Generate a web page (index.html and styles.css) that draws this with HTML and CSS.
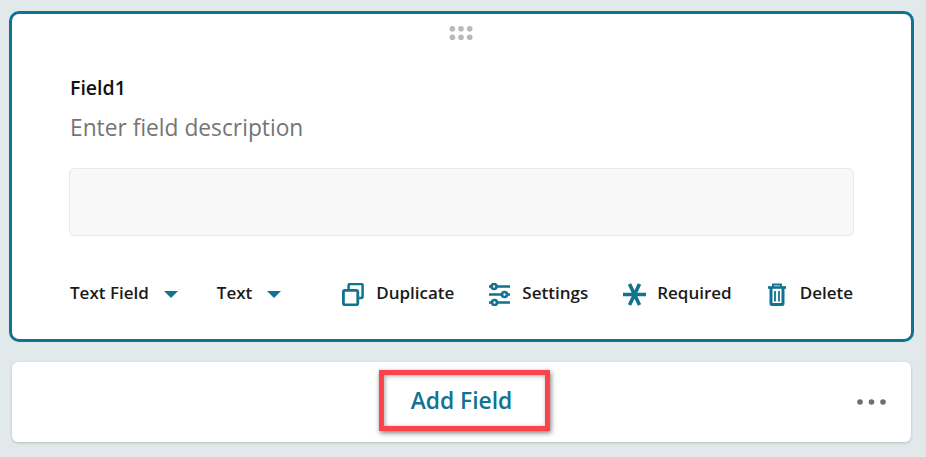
FILE: index.html
```html
<!DOCTYPE html>
<html lang="en">
<head>
    <meta charset="UTF-8">
    <meta name="viewport" content="width=device-width, initial-scale=1.0">
    <title>Form Builder</title>
    <link rel="stylesheet" href="styles.css">
</head>
<body>
<div class="page">
    <section class="field-card">
        <div class="drag-handle">
            <svg width="24" height="16" viewBox="0 0 24 16" fill="#b9b9b9">
                <circle cx="3.4" cy="3.8" r="2.8"/><circle cx="12" cy="3.8" r="2.8"/><circle cx="20.7" cy="3.8" r="2.8"/>
                <circle cx="3.4" cy="12.2" r="2.8"/><circle cx="12" cy="12.2" r="2.8"/><circle cx="20.7" cy="12.2" r="2.8"/>
            </svg>
        </div>
        <div class="field-name">Field1</div>
        <div class="field-desc">Enter field description</div>
        <div class="field-input"></div>
        <div class="toolbar">
            <div class="dropdown dropdown-type">Text Field <span class="caret"></span></div>
            <div class="dropdown">Text <span class="caret"></span></div>
            <div class="actions">
                <div class="action action-duplicate">
                    <svg width="22" height="23" viewBox="0 0 22 23" fill="none" stroke="#0f7391" stroke-width="2.5">
                        <path d="M6.6 6V2.5a1.5 1.5 0 0 1 1.5-1.5h11a1.5 1.5 0 0 1 1.5 1.5v11a1.5 1.5 0 0 1-1.5 1.5h-2"/>
                        <rect x="1.4" y="7.4" width="14.4" height="14.4" rx="1.5" stroke-width="2.8"/>
                    </svg>
                    Duplicate
                </div>
                <div class="action">
                    <svg width="21" height="23" viewBox="0 0 21 23" fill="#fff" stroke="#0f7391" stroke-width="2.6">
                        <path d="M0 3.5h21M0 11.5h21M0 19.5h21"/>
                        <circle cx="5" cy="3.5" r="2.5"/><circle cx="15.5" cy="11.5" r="2.5"/><circle cx="5.5" cy="19.5" r="2.5"/>
                    </svg>
                    Settings
                </div>
                <div class="action action-required">
                    <svg width="23" height="23" viewBox="0 0 23 23" fill="none" stroke="#0f7391" stroke-width="3.6">
                        <path d="M0 11.5h23M6.5 1l10 21M16.5 1l-10 21"/>
                    </svg>
                    Required
                </div>
                <div class="action action-delete">
                    <svg width="18" height="23" viewBox="0 0 18 23" fill="none" stroke="#0f7391">
                        <path d="M0 4.5h18" stroke-width="2.6"/>
                        <path d="M5 4V1.5h8V4" stroke-width="1.9"/>
                        <path d="M3 5v15.5a1 1 0 0 0 1 1h10a1 1 0 0 0 1-1V5" stroke-width="3"/>
                        <path d="M7 8v10.5M11 8v10.5" stroke-width="1.8"/>
                    </svg>
                    Delete
                </div>
            </div>
        </div>
    </section>
    <section class="add-bar">
        <a class="add-field">Add Field</a>
        <div class="more">
            <svg width="32" height="8" viewBox="0 0 32 8" fill="#6f6f6f">
                <circle cx="4" cy="4" r="2.8"/><circle cx="15.5" cy="4" r="2.8"/><circle cx="27" cy="4" r="2.8"/>
            </svg>
        </div>
    </section>
</div>
</body>
</html>
```

FILE: styles.css
```css
* {
    box-sizing: border-box;
}

body {
    margin: 0;
    background-color: #e2e9eb;
    font-family: "Open Sans", sans-serif;
    color: #1a1a1a;
}

.page {
    height: 457px;
    padding: 11px 12px 0 9px;
    overflow: hidden;
}

.field-card {
    height: 331px;
    padding: 11px 57px 0 58px;
    background-color: #fff;
    border: 3px solid #0f7391;
    border-radius: 10px;
}

.drag-handle {
    display: flex;
    justify-content: center;
    height: 16px;
    margin-right: 2px;
}

.field-name {
    margin-top: 35px;
    font-size: 19.5px;
    line-height: 24px;
    font-weight: 600;
    color: #111;
}

.field-desc {
    margin-top: 13px;
    font-size: 22.75px;
    line-height: 30px;
    color: #757575;
}

.field-input {
    height: 68px;
    margin-top: 25px;
    margin-left: -1px;
    background-color: #f8f8f8;
    border: 1px solid #e9e9e9;
    border-radius: 5px;
}

.toolbar {
    display: flex;
    align-items: center;
    height: 24px;
    margin-top: 44px;
    padding-right: 1px;
    font-size: 17px;
    font-weight: 600;
}

.dropdown {
    display: flex;
    align-items: center;
    gap: 15px;
}

.dropdown-type {
    margin-right: 39px;
}

.caret {
    width: 0;
    height: 0;
    margin-top: 5px;
    border-left: 7.5px solid transparent;
    border-right: 7.5px solid transparent;
    border-top: 7px solid #0f7391;
}

.actions {
    display: flex;
    align-items: center;
    gap: 35px;
    margin-left: auto;
}

.action {
    display: flex;
    align-items: center;
    gap: 12px;
}

.action svg {
    margin-top: 4px;
}

.action-required {
    gap: 11px;
}

.action-delete {
    gap: 14px;
    margin-left: 1px;
}

.add-bar {
    position: relative;
    display: flex;
    align-items: center;
    justify-content: center;
    height: 80px;
    margin: 20px 3px 0;
    background-color: #fff;
    border-radius: 6px;
    box-shadow: 0 1px 3px rgba(0, 0, 0, 0.2);
}

.add-field {
    display: flex;
    align-items: center;
    justify-content: center;
    width: 171px;
    height: 61px;
    margin: 0 0 3px 6px;
    padding-right: 6px;
    font-size: 22.8px;
    font-weight: 600;
    color: #0f7391;
    border: 5px solid #fb4349;
    box-shadow: 1px 2px 5px rgba(0, 0, 0, 0.5), inset 1px 1px 4px rgba(0, 0, 0, 0.35);
}

.more {
    position: absolute;
    top: 36px;
    right: 23px;
    line-height: 0;
}
```
